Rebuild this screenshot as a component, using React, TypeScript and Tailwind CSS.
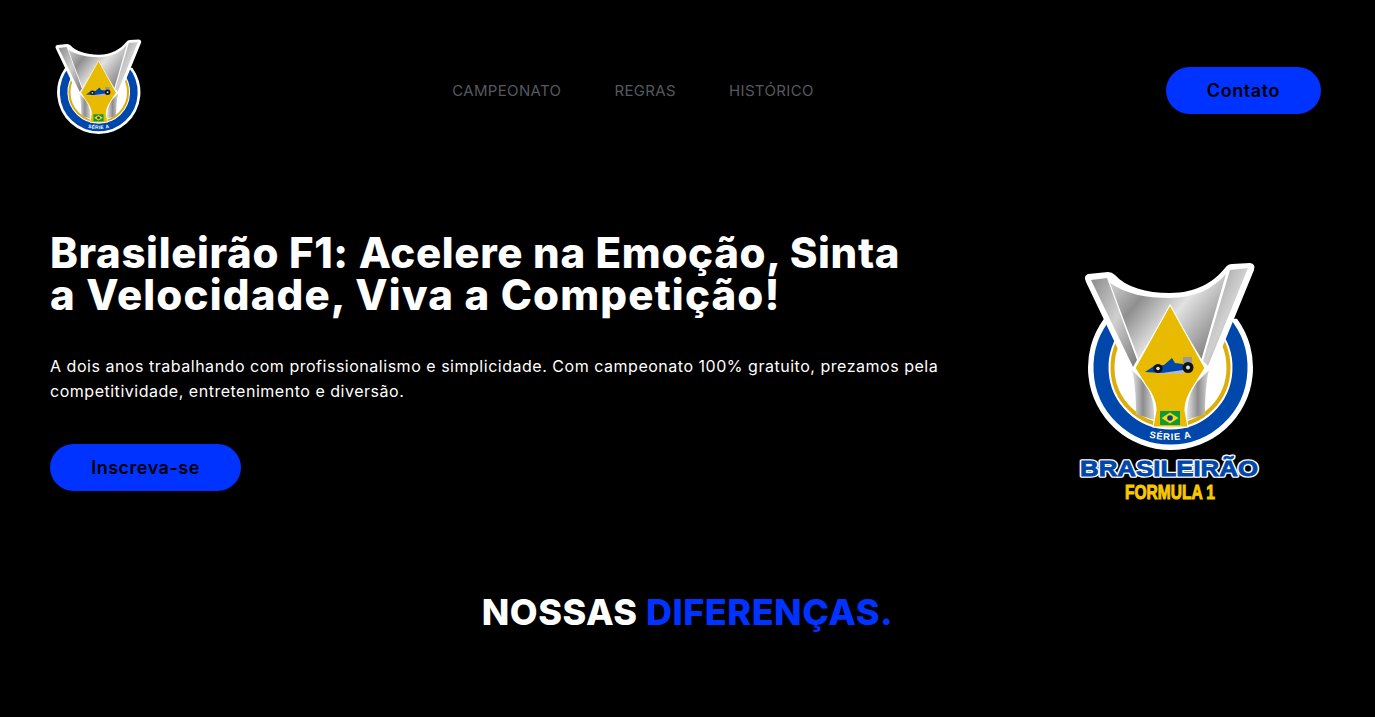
const POPPINS_LIKE = "font-['Inter','Liberation_Sans',sans-serif]";

function Emblem() {
  return (
    <>
      <defs>
        <linearGradient id="silverL" x1="0" y1="0" x2="1" y2="1">
          <stop offset="0" stopColor="#8c8c8c" />
          <stop offset="0.5" stopColor="#d0d0d0" />
          <stop offset="1" stopColor="#7a7a7a" />
        </linearGradient>
        <linearGradient id="silverC" x1="0" y1="0" x2="1" y2="0.6">
          <stop offset="0" stopColor="#dcdcdc" />
          <stop offset="0.32" stopColor="#8f8f8f" />
          <stop offset="0.62" stopColor="#e2e2e2" />
          <stop offset="1" stopColor="#8a8a8a" />
        </linearGradient>
        <linearGradient id="pillar" x1="0" y1="0" x2="1" y2="0">
          <stop offset="0" stopColor="#e6e6e6" />
          <stop offset="0.5" stopColor="#8c8c8c" />
          <stop offset="1" stopColor="#d8d8d8" />
        </linearGradient>
      </defs>
      {/* disc: open at the top, the cup sits in the gap */}
      <path d="M20 56.700A82.500 82.500 0 1 0 153 56.700Z" fill="#fff" />
      <path d="M34 60A69.500 69.500 0 1 0 139 60" fill="none" stroke="#0047ab" strokeWidth="15" />
      <path d="M45 65A58 58 0 1 0 128 65" fill="none" stroke="#dcae0a" strokeWidth="4" />
      {/* cup outline */}
      <path
        d="M4 12L24 10Q28 10 31 13C42 25 62 31 86 31C112 31 130 20 141 6Q144 2 148 2L166 1Q172 2 170 8L129 108L44 108L2 20Q-1 14 4 12Z"
        fill="#fff"
      />
      <path d="M7 18L23 16L53 98L49 105Z" fill="url(#silverL)" />
      <path d="M146 8L164 6L124 104L119 99Z" fill="url(#silverL)" />
      <path d="M26 21C42 32 62 36 86 36C110 36 129 27 142 12L117.500 97L86 45L54.500 97Z" fill="url(#silverC)" />
      {/* pillars */}
      <path d="M48 108L60 120C67 130 71 142 70 158L52 152C52 135 51 120 48 108Z" fill="url(#pillar)" />
      <path d="M125 108L113 120C106 130 102 142 103 158L121 152C121 135 122 120 125 108Z" fill="url(#pillar)" />
      {/* gold diamond and stem */}
      <path
        d="M86 43L121 106L111 122C104 132 101 140 101 148L104 165L69 165L72 148C72 140 69 132 61 122L51 106Z"
        fill="#e8bb00"
        stroke="#fff"
        strokeWidth="1.2"
        strokeLinejoin="round"
      />
      {/* car */}
      <rect x="72" y="107" width="28" height="5" fill="#b9b9b9" />
      <path d="M61 110L70 104L80 103L88 96L91 101L99 102L99 108L78 111Z" fill="#0047ab" />
      <rect x="99" y="95" width="9" height="6" fill="#9a9a9a" />
      <circle cx="74" cy="106.500" r="4.500" fill="#111" />
      <circle cx="74" cy="106.500" r="1.800" fill="#ddd" />
      <circle cx="104" cy="105.500" r="5.500" fill="#111" />
      <circle cx="104" cy="105.500" r="2" fill="#ddd" />
      {/* flag */}
      <rect x="76" y="149" width="20" height="14" fill="#0a9a3c" />
      <path d="M86 150.500L94.500 156L86 161.500L77.500 156Z" fill="#f5d90a" />
      <circle cx="86" cy="156" r="2.800" fill="#123a8c" />
      {/* serie a */}
      <path id="serieArc" d="M60 174Q86 182 113 174" fill="none" />
      <text fontFamily="'Liberation Sans',sans-serif" fontWeight="700" fontSize="9.500" fill="#fff" letterSpacing="0.8">
        <textPath href="#serieArc" startOffset="50%" textAnchor="middle">
          SÉRIE A
        </textPath>
      </text>
    </>
  );
}

function SmallLogo() {
  return (
    <div className="h-[103px]">
      <svg viewBox="0 0 172 190" className="w-[87px] h-[96px] block">
        <Emblem />
      </svg>
    </div>
  );
}

function HeroLogo() {
  const brand = {
    x: 93,
    y: 214,
    textAnchor: "middle",
    textLength: 178,
    lengthAdjust: "spacingAndGlyphs",
    fontFamily: "'Liberation Sans',sans-serif",
    fontWeight: 700,
    fontSize: 22,
  } as const;
  return (
    <svg viewBox="0 0 184 242" className="w-[184px] h-[242px] block">
      <g transform="translate(8 0)">
        <Emblem />
      </g>
      <text {...brand} fill="#fff" stroke="#fff" strokeWidth="3.5" strokeLinejoin="round">
        BRASILEIRÃO
      </text>
      <text {...brand} fill="#0047ab" stroke="#0047ab" strokeWidth="0.8">
        BRASILEIRÃO
      </text>
      <text
        x="94"
        y="237"
        textAnchor="middle"
        textLength="90"
        lengthAdjust="spacingAndGlyphs"
        fontFamily="'Liberation Sans',sans-serif"
        fontWeight="700"
        fontSize="20"
        fill="#f8c800"
        stroke="#f8c800"
        strokeWidth="1"
      >
        FORMULA 1
      </text>
    </svg>
  );
}

export default function App() {
  return (
    <div className={`min-h-[717px] bg-black text-white overflow-hidden ${POPPINS_LIKE}`}>
      <header className="flex items-center justify-between pl-[55px] pr-[54px] pt-[39px]">
        <SmallLogo />
        <nav className="flex gap-[53px] text-[15px] tracking-[0.35px] text-[#55595f] mr-[42px] pt-[2px]">
          <a>CAMPEONATO</a>
          <a>REGRAS</a>
          <a>HISTÓRICO</a>
        </nav>
        <button className="w-[155px] h-[47px] rounded-full bg-[#0033ff] text-black text-[18px] tracking-[0.6px] font-semibold">
          Contato
        </button>
      </header>

      <section className="flex justify-between pl-[50px] pr-[115px] pt-[84px]">
        <div className="pt-[6px]">
          <h1 className="text-[42px] leading-[42px] font-extrabold">
            <span className="block tracking-[0.65px]">Brasileirão F1: Acelere na Emoção, Sinta</span>
            <span className="block tracking-[1.15px]">a Velocidade, Viva a Competição!</span>
          </h1>
          <p className="mt-[38px] text-[16px] leading-[25px] tracking-[0.52px]">
            A dois anos trabalhando com profissionalismo e simplicidade. Com campeonato 100% gratuito, prezamos pela
            <br />
            competitividade, entretenimento e diversão.
          </p>
          <button className="mt-[40px] w-[191px] h-[47px] rounded-full bg-[#0033ff] text-black text-[18px] tracking-[0.5px] font-semibold">
            Inscreva-se
          </button>
        </div>
        <div className="pt-[36px]">
          <HeroLogo />
        </div>
      </section>

      <h2 className="mt-[81px] text-center text-[36px] leading-[54px] tracking-[0.5px] font-extrabold">
        NOSSAS <span className="text-[#0033ff]">DIFERENÇAS.</span>
      </h2>
    </div>
  );
}
